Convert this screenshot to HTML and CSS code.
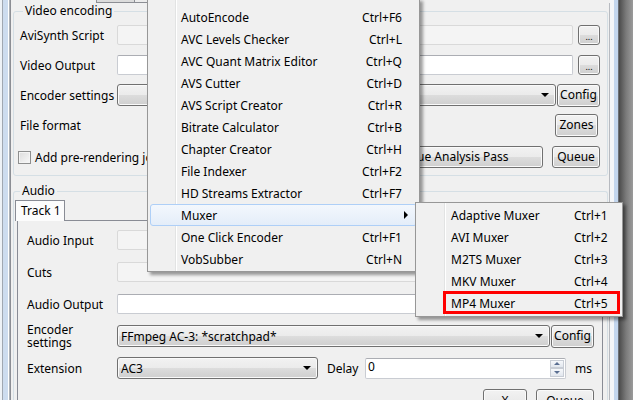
FILE: index.html
```html
<!DOCTYPE html>
<html>
<head>
<meta charset="utf-8">
<link rel="stylesheet" href="styles.css">
</head>
<body>
<div class="screen">
  <div class="edge-left"></div>
  <div class="main">
    <div class="tabstrip">
      <span class="tab tab-sel"></span>
      <span class="tab tab-two"></span>
      <span class="tab tab-three"></span>
    </div>
    <div class="page">
      <fieldset class="group group-video">
        <legend class="legend">Video encoding</legend>
        <div class="row">
          <span class="lbl">AviSynth Script</span>
          <span class="input input-dis grow"></span>
          <span class="btn btn-dots">...</span>
        </div>
        <div class="row">
          <span class="lbl">Video Output</span>
          <span class="input grow"></span>
          <span class="btn btn-dots">...</span>
        </div>
        <div class="row">
          <span class="lbl">Encoder settings</span>
          <span class="combo grow combo-enc"><span class="combo-text"></span><span class="arrow"></span></span>
          <span class="btn btn-config">Config</span>
        </div>
        <div class="row">
          <span class="lbl">File format</span>
          <span class="grow"></span>
          <span class="btn btn-zones">Zones</span>
        </div>
        <div class="row row-last">
          <span class="check"></span>
          <span class="check-lbl">Add pre-rendering job</span>
          <span class="grow"></span>
          <span class="btn btn-analysis">Queue Analysis Pass</span>
          <span class="btn btn-queue">Queue</span>
        </div>
      </fieldset>

      <fieldset class="group group-audio">
        <legend class="legend">Audio</legend>
        <div class="atabs"><span class="atab">Track 1</span></div>
        <div class="apage">
          <div class="arow">
            <span class="albl">Audio Input</span>
            <span class="input input-dis grow"></span>
          </div>
          <div class="arow">
            <span class="albl">Cuts</span>
            <span class="input input-dis grow"></span>
          </div>
          <div class="arow">
            <span class="albl">Audio Output</span>
            <span class="input grow"></span>
          </div>
          <div class="arow">
            <span class="albl albl-two"><span class="ln">Encoder</span><span class="ln">settings</span></span>
            <span class="combo grow"><span class="combo-text">FFmpeg AC-3: *scratchpad*</span><span class="arrow"></span></span>
            <span class="btn btn-config2">Config</span>
          </div>
          <div class="arow">
            <span class="albl">Extension</span>
            <span class="combo combo-ext"><span class="combo-text">AC3</span><span class="arrow"></span></span>
            <span class="delay-lbl">Delay</span>
            <span class="input input-delay"><span class="delay-val">0</span><span class="spin"><span class="spin-btn"><span class="tri-up"></span></span><span class="spin-btn"><span class="tri-down"></span></span></span></span>
            <span class="ms">ms</span>
          </div>
          <div class="brow">
            <span class="btn btn-x">X</span>
            <span class="btn btn-aqueue">Queue</span>
          </div>
        </div>
      </fieldset>
    </div>
  </div>
  <div class="edge-right"></div>

  <div class="menu menu-main">
    <div class="item"><span class="it">AutoEncode</span><span class="sc">Ctrl+F6</span></div>
    <div class="item"><span class="it">AVC Levels Checker</span><span class="sc">Ctrl+L</span></div>
    <div class="item"><span class="it">AVC Quant Matrix Editor</span><span class="sc">Ctrl+Q</span></div>
    <div class="item"><span class="it">AVS Cutter</span><span class="sc">Ctrl+D</span></div>
    <div class="item"><span class="it">AVS Script Creator</span><span class="sc">Ctrl+R</span></div>
    <div class="item"><span class="it">Bitrate Calculator</span><span class="sc">Ctrl+B</span></div>
    <div class="item"><span class="it">Chapter Creator</span><span class="sc">Ctrl+H</span></div>
    <div class="item"><span class="it">File Indexer</span><span class="sc">Ctrl+F2</span></div>
    <div class="item"><span class="it">HD Streams Extractor</span><span class="sc">Ctrl+F7</span></div>
    <div class="item item-hot"><span class="it">Muxer</span><span class="sub-arrow"></span></div>
    <div class="item"><span class="it">One Click Encoder</span><span class="sc">Ctrl+F1</span></div>
    <div class="item"><span class="it">VobSubber</span><span class="sc">Ctrl+N</span></div>
  </div>

  <div class="menu menu-sub">
    <div class="item"><span class="it">Adaptive Muxer</span><span class="sc2">Ctrl+1</span></div>
    <div class="item"><span class="it">AVI Muxer</span><span class="sc2">Ctrl+2</span></div>
    <div class="item"><span class="it">M2TS Muxer</span><span class="sc2">Ctrl+3</span></div>
    <div class="item"><span class="it">MKV Muxer</span><span class="sc2">Ctrl+4</span></div>
    <div class="item"><span class="it">MP4 Muxer</span><span class="sc2">Ctrl+5</span></div>
    <div class="redbox"></div>
  </div>
</div>
</body>
</html>
```
FILE: styles.css
```css
* { box-sizing: border-box; }
html, body { margin: 0; padding: 0; }
body {
  font-family: "Noto Sans", "Open Sans", sans-serif;
  font-size: 12px;
  color: #000;
  background: #f0f0f0;
}
.screen {
  position: relative;
  width: 633px;
  height: 400px;
  overflow: hidden;
  display: flex;
  background: #f0f0f0;
}
.edge-left {
  width: 10px;
  flex: none;
  background: linear-gradient(to right, #eef2f7 0, #eef2f7 2px, #a0a7b1 2px, #a0a7b1 3px, #cddcef 3px, #cddcef 8px, #ffffff 8px, #ffffff 9px, #adb2b9 9px);
}
.edge-right {
  width: 23px;
  flex: none;
  background: linear-gradient(to right, #f4f6f9 0, #f4f6f9 4px, #c3d6ee 4px, #c3d6ee 8px, #6c7077 8px, #6c7077 9px, #4b4b4b 9px, #7a7a7a 16px, #9b9b9b 23px);
}
.main {
  width: 600px;
  flex: none;
  display: flex;
  flex-direction: column;
}
.tabstrip {
  height: 3px;
  display: flex;
  flex: none;
}
.tab { height: 3px; display: block; }
.tab-sel { width: 87px; background: #f0f0f0; border-left: 1px solid #8c8e94; border-right: 1px solid #8c8e94; }
.tab-two { width: 38px; background: #dcdcdc; border-right: 1px solid #8c8e94; border-bottom: 1px solid #8c8e94; }
.tab-three { width: 30px; background: #ececec; border-bottom: 1px solid #8c8e94; }
.page {
  flex: 1;
  border-left: 1px solid #8c8e94;
  border-right: 1px solid #b7bac0;
  padding: 0 1px 0 2px;
  display: flex;
  flex-direction: column;
}
.group {
  margin: 0;
  border: 1px solid #d5dfe5;
  border-radius: 3px;
  min-width: 0;
}
.legend {
  padding: 0 2px;
  margin-left: 3px;
  line-height: 14px;
  height: 14px;
}
.group-video {
  padding: 2px 7px 0 6px;
  margin-top: 1px;
  height: 172px;
}
.row {
  display: flex;
  align-items: center;
  height: 30px;
}
.row-last { height: 34px; }
.lbl { width: 97px; flex: none; }
.grow { flex: 1; align-self: stretch; }
.row .input, .row .combo, .arow .input, .arow .combo { align-self: center; }
.input {
  display: block;
  height: 20px;
  background: #fff;
  border: 1px solid #c9ccd2;
  border-top-color: #abadb3;
  border-radius: 2px;
}
.input-dis { background: #f4f4f4; border-color: #d9d9d9; }
.btn {
  display: flex;
  align-items: center;
  justify-content: center;
  flex: none;
  border: 1px solid #707070;
  border-radius: 3px;
  background: linear-gradient(#f2f2f2 0%, #ebebeb 50%, #dddddd 50%, #cfcfcf 100%);
  box-shadow: inset 0 0 0 1px #fafafa;
  line-height: 14px;
}
.btn-dots { width: 22px; height: 20px; margin-left: 5px; font-size: 9px; padding-top: 4px; }
.combo {
  display: flex;
  align-items: center;
  height: 22px;
  border: 1px solid #707070;
  border-radius: 3px;
  background: linear-gradient(#f2f2f2 0%, #ebebeb 50%, #dddddd 50%, #cfcfcf 100%);
  box-shadow: inset 0 0 0 1px #fafafa;
  padding-left: 3px;
}
.combo-text { flex: 1; white-space: nowrap; overflow: hidden; }
.arrow {
  width: 0; height: 0;
  border-left: 4px solid transparent;
  border-right: 4px solid transparent;
  border-top: 4px solid #000;
  margin-right: 6px;
}
.btn-config { width: 43px; height: 23px; margin-left: 1px; }
.btn-zones { width: 43px; height: 23px; margin-right: 2px; }
.check {
  width: 13px; height: 13px; flex: none;
  margin-left: -2px; margin-right: 4px;
  border: 1px solid #8e8f8f;
  background: linear-gradient(135deg, #dcdcdc, #f8f8f8);
  box-shadow: inset 0 0 0 1px #f4f4f4;
}
.check-lbl { white-space: nowrap; }
.btn-analysis { width: 184px; height: 22px; }
.btn-queue { width: 48px; height: 22px; margin-left: 9px; }

.group-audio {
  margin-top: 8px;
  padding: 2px 4px 0 3px;
  flex: 1;
  border-bottom: none;
  border-radius: 3px 3px 0 0;
}
.atabs { display: flex; height: 20px; }
.atab {
  margin-left: -2px;
  width: 50px;
  height: 21px;
  border: 1px solid #898c95;
  border-bottom: none;
  background: #fcfcfc;
  padding: 2px 0 0 5px;
  line-height: 16px;
  position: relative;
  z-index: 1;
}
.apage {
  border: 1px solid #898c95;
  border-bottom: none;
  background: #f0f0f0;
  padding: 3px 8px 0 9px;
  height: 190px;
}
.arow { display: flex; align-items: center; height: 32px; }
.albl { width: 90px; flex: none; }
.albl-two { display: flex; flex-direction: column; gap: 0; }
.ln { display: block; line-height: 13px; height: 13px; overflow: visible; }
.btn-config2 { width: 43px; height: 23px; margin-left: 1px; }
.combo-ext { width: 201px; flex: none; }
.delay-lbl { width: 38px; margin-left: 9px; flex: none; }
.input-delay { display: flex; width: 201px; flex: none; height: 21px; padding-left: 2px; line-height: 16px; }
.delay-val { flex: 1; }
.spin { display: flex; flex-direction: column; width: 15px; padding: 1px 1px 1px 0; }
.spin-btn {
  flex: 1;
  display: flex; align-items: center; justify-content: center;
  border: 1px solid #c8cdd5;
  background: linear-gradient(#f6f8fb, #e2e7ee);
}
.tri-up { width: 0; height: 0; border-left: 3px solid transparent; border-right: 3px solid transparent; border-bottom: 3px solid #5a6f92; }
.tri-down { width: 0; height: 0; border-left: 3px solid transparent; border-right: 3px solid transparent; border-top: 3px solid #5a6f92; }
.ms { margin-left: 9px; }
.brow { display: flex; justify-content: flex-end; margin-top: 5px; padding-right: 0; }
.btn-x { width: 44px; height: 23px; }
.btn-aqueue { width: 58px; height: 23px; margin-left: 9px; }

/* menus */
.menu {
  position: absolute;
  background-color: #f0f0f0;
  border: 1px solid #979797;
  box-shadow: 3px 3px 3px rgba(0,0,0,0.38);
}
.menu-main {
  left: 147px;
  top: -2px;
  width: 273px;
  padding: 7px 2px 1px 2px;
  background-image: linear-gradient(to right, transparent 27px, #e2e3e3 27px, #e2e3e3 28px, #ffffff 28px, #ffffff 29px, transparent 29px);
}
.menu-sub {
  left: 415px;
  top: 202px;
  width: 208px;
  padding: 1px 2px 2px 2px;
  background-image: linear-gradient(to right, transparent 28px, #e2e3e3 28px, #e2e3e3 29px, #ffffff 29px, #ffffff 30px, transparent 30px);
}
.item {
  display: flex;
  align-items: center;
  height: 22px;
  border: 1px solid transparent;
  border-radius: 3px;
  padding-left: 30px;
  white-space: nowrap;
}
.menu-sub .item { padding-left: 32px; }
.item-hot {
  border-color: #aecff7;
  background: linear-gradient(#f3f7fd, #e4edf9);
}
.it { flex: 1; }
.sc { padding-right: 14px; text-align: right; }
.sc2 { width: 42px; margin-right: 3px; }
.sub-arrow {
  width: 0; height: 0;
  border-top: 4px solid transparent;
  border-bottom: 4px solid transparent;
  border-left: 4px solid #000;
  margin-right: 8px;
}
.redbox {
  position: absolute;
  left: 27px;
  top: 88px;
  width: 177px;
  height: 23px;
  border: 3px solid #ff0000;
}
```
